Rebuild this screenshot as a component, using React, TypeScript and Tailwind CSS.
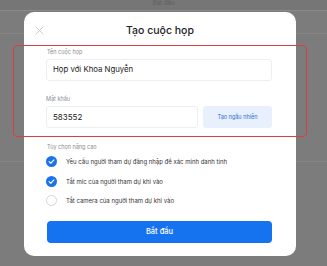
import React from "react";

function Check({ checked }: { checked: boolean }) {
  if (checked) {
    return (
      <svg width="11" height="11" viewBox="0 0 22 22" className="shrink-0">
        <circle cx="11" cy="11" r="11" fill="#1a73ec" />
        <path d="M6.2 11.3l3.3 3.2 6.4-6.6" fill="none" stroke="#fff" strokeWidth="2.2" strokeLinecap="round" strokeLinejoin="round" />
      </svg>
    );
  }
  return <div className="w-[11px] h-[11px] shrink-0 rounded-full border border-[#d4d6da] bg-white" />;
}

export default function App() {
  const rows = [
    { t: "Yêu cầu người tham dự đăng nhập để xác minh danh tính", c: true },
    { t: "Tắt mic của người tham dự khi vào", c: true },
    { t: "Tắt camera của người tham dự khi vào", c: false },
  ];
  return (
    <div
      className="relative w-[327px] h-[266px] overflow-hidden bg-[#7c7c7c]"
      style={{ fontFamily: "Inter, 'Noto Sans', sans-serif" }}
    >
      {/* underlying page hints */}
      <div className="h-[10px] bg-[#767676] flex justify-center items-start">
        <span className="text-[6px] leading-[6px] text-[#5e5e5e]">Bắt đầu</span>
      </div>
      <div className="h-px bg-[#8a8a8a]" />
      <div className="mt-[22px] h-px bg-[#848484]" />
      <div className="mt-[127px] h-px bg-[#858585]" />

      {/* modal */}
      <div className="absolute left-[24px] top-[12px] w-[272px] h-[244px] rounded-[10px] bg-white">
        <div className="relative h-[36px] flex items-center justify-center pt-[2px]">
          <svg className="absolute left-[11px] top-[14px]" width="9" height="9" viewBox="0 0 9 9">
            <path d="M1 1l7 7M8 1L1 8" stroke="#c4c6ca" strokeWidth="0.9" strokeLinecap="round" />
          </svg>
          <span className="text-[10.5px] leading-[14px] font-medium text-[#222]">Tạo cuộc họp</span>
        </div>
        <div className="pl-[22px] pr-[24px] flex flex-col">
          <div className="text-[5.5px] leading-[8px] text-[#8a8d93] pl-[1px]">Tên cuộc họp</div>
          <div className="mt-[3px] h-[22px] rounded-[3px] border border-[#eceef1] flex items-center px-[6px] text-[7.8px] text-[#222]">
            Họp với Khoa Nguyễn
          </div>
          <div className="mt-[14px] text-[5.5px] leading-[8px] text-[#8a8d93]">Mật khẩu</div>
          <div className="mt-[3px] flex gap-[5px] h-[22px]">
            <div className="flex-1 rounded-[3px] border border-[#eceef1] flex items-center px-[6px] text-[8px] text-[#222]">
              583552
            </div>
            <div className="w-[69px] rounded-[3px] bg-[#e7f0fc] flex items-center justify-center text-[5.5px] text-[#2a6fd6]">
              Tạo ngẫu nhiên
            </div>
          </div>
          <div className="mt-[15px] text-[5.5px] leading-[8px] text-[#8a8d93] pl-[1px]">Tùy chọn nâng cao</div>
          <div className="mt-[5px] flex flex-col gap-[8.5px]">
            {rows.map((r) => (
              <div key={r.t} className="flex items-center gap-[9px] h-[11px]">
                <Check checked={r.c} />
                <span className="text-[6px] text-[#333]">{r.t}</span>
              </div>
            ))}
          </div>
          <div className="mt-[15px] ml-[1px] h-[22px] rounded-[4px] bg-[#1673f0] flex items-center justify-center text-[7.5px] text-white font-medium">
            Bắt đầu
          </div>
        </div>
        {/* red highlight */}
        <div className="absolute left-[-11px] top-[33px] w-[294px] h-[92px] rounded-[4px] border-[1.5px] border-[#d8413d]" />
      </div>
    </div>
  );
}
